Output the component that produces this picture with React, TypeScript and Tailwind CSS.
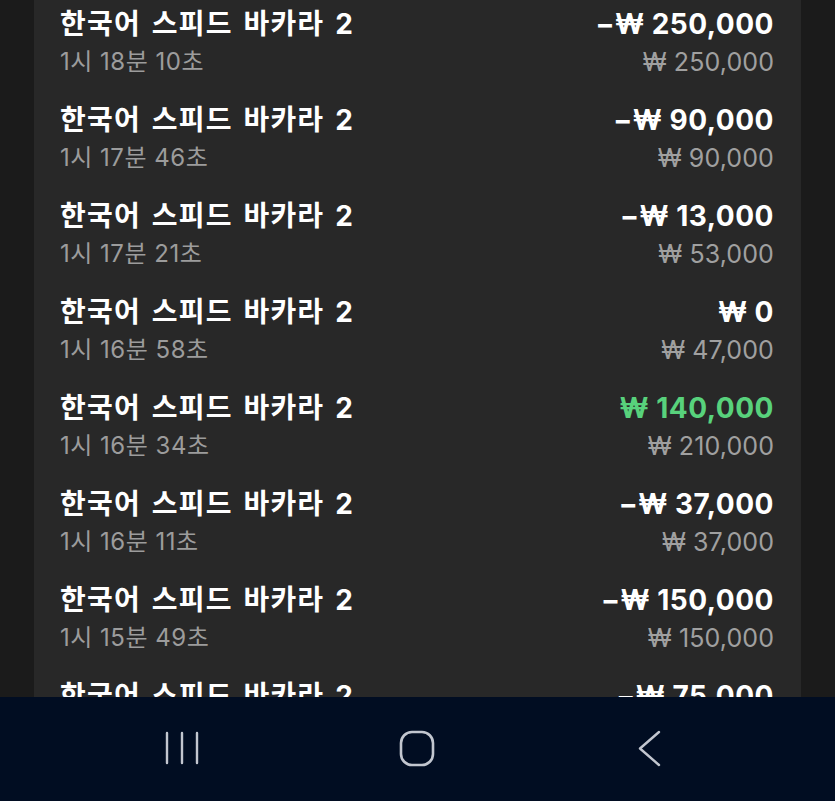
const rows = [
  { time: "1시 18분 10초", result: "−₩ 250,000", bet: "₩ 250,000", win: false },
  { time: "1시 17분 46초", result: "−₩ 90,000", bet: "₩ 90,000", win: false },
  { time: "1시 17분 21초", result: "−₩ 13,000", bet: "₩ 53,000", win: false },
  { time: "1시 16분 58초", result: "₩ 0", bet: "₩ 47,000", win: false },
  { time: "1시 16분 34초", result: "₩ 140,000", bet: "₩ 210,000", win: true },
  { time: "1시 16분 11초", result: "−₩ 37,000", bet: "₩ 37,000", win: false },
  { time: "1시 15분 49초", result: "−₩ 150,000", bet: "₩ 150,000", win: false },
  { time: "1시 15분 26초", result: "−₩ 75,000", bet: "₩ 75,000", win: false },
]

const font = { fontFamily: 'Inter, "Noto Sans CJK KR", "Noto Sans", sans-serif' }

export default function App() {
  return (
    <div className="h-[801px] w-[835px] flex flex-col overflow-hidden bg-[#1b1b1b]" style={font}>
      {/* History list */}
      <div className="flex-1 min-h-0 overflow-hidden mx-[34px] bg-[#282828] px-[27px]">
        <div className="-mt-[5px]">
          {rows.map((r, i) => (
            <div key={i} className="flex justify-between py-[10px]">
              <div className="flex flex-col -ml-[1px]">
                <span className="text-[28px] leading-[38px] font-bold text-white tracking-[1.2px] [word-spacing:3px] whitespace-nowrap">
                  한국어 스피드 바카라 2
                </span>
                <span className="text-[24px] leading-[38px] text-[#9c9c9c] tracking-[0.5px] whitespace-nowrap">
                  {r.time}
                </span>
              </div>
              <div className="flex flex-col items-end">
                <span
                  className={`text-[28px] leading-[38px] font-bold tracking-[0.5px] whitespace-nowrap ${
                    r.win ? "text-[#58d27c]" : "text-white"
                  }`}
                >
                  {r.result}
                </span>
                <span className="text-[25px] leading-[38px] text-[#a0a0a0] tracking-[0.1px] whitespace-nowrap">
                  {r.bet}
                </span>
              </div>
            </div>
          ))}
        </div>
      </div>

      {/* Android nav bar */}
      <div className="h-[104px] shrink-0 bg-[#010d22] flex items-center justify-between pl-[165px] pr-[173px] pb-[2px]">
        <svg width="34" height="34" viewBox="0 0 34 34" fill="none" stroke="#c2c6cf" strokeWidth="2.4" strokeLinecap="round">
          <path d="M2 2v30M17 2v30M32 2v30" />
        </svg>
        <svg width="36" height="37" viewBox="0 0 36 37" fill="none" stroke="#c2c6cf" strokeWidth="2.6" className="-ml-[4px]">
          <rect x="2" y="2" width="32" height="33" rx="11" />
        </svg>
        <svg width="24" height="37" viewBox="0 0 24 37" fill="none" stroke="#c2c6cf" strokeWidth="2.4" strokeLinecap="round" strokeLinejoin="round">
          <path d="M21 2 2 18.5 21 35" />
        </svg>
      </div>
    </div>
  )
}
